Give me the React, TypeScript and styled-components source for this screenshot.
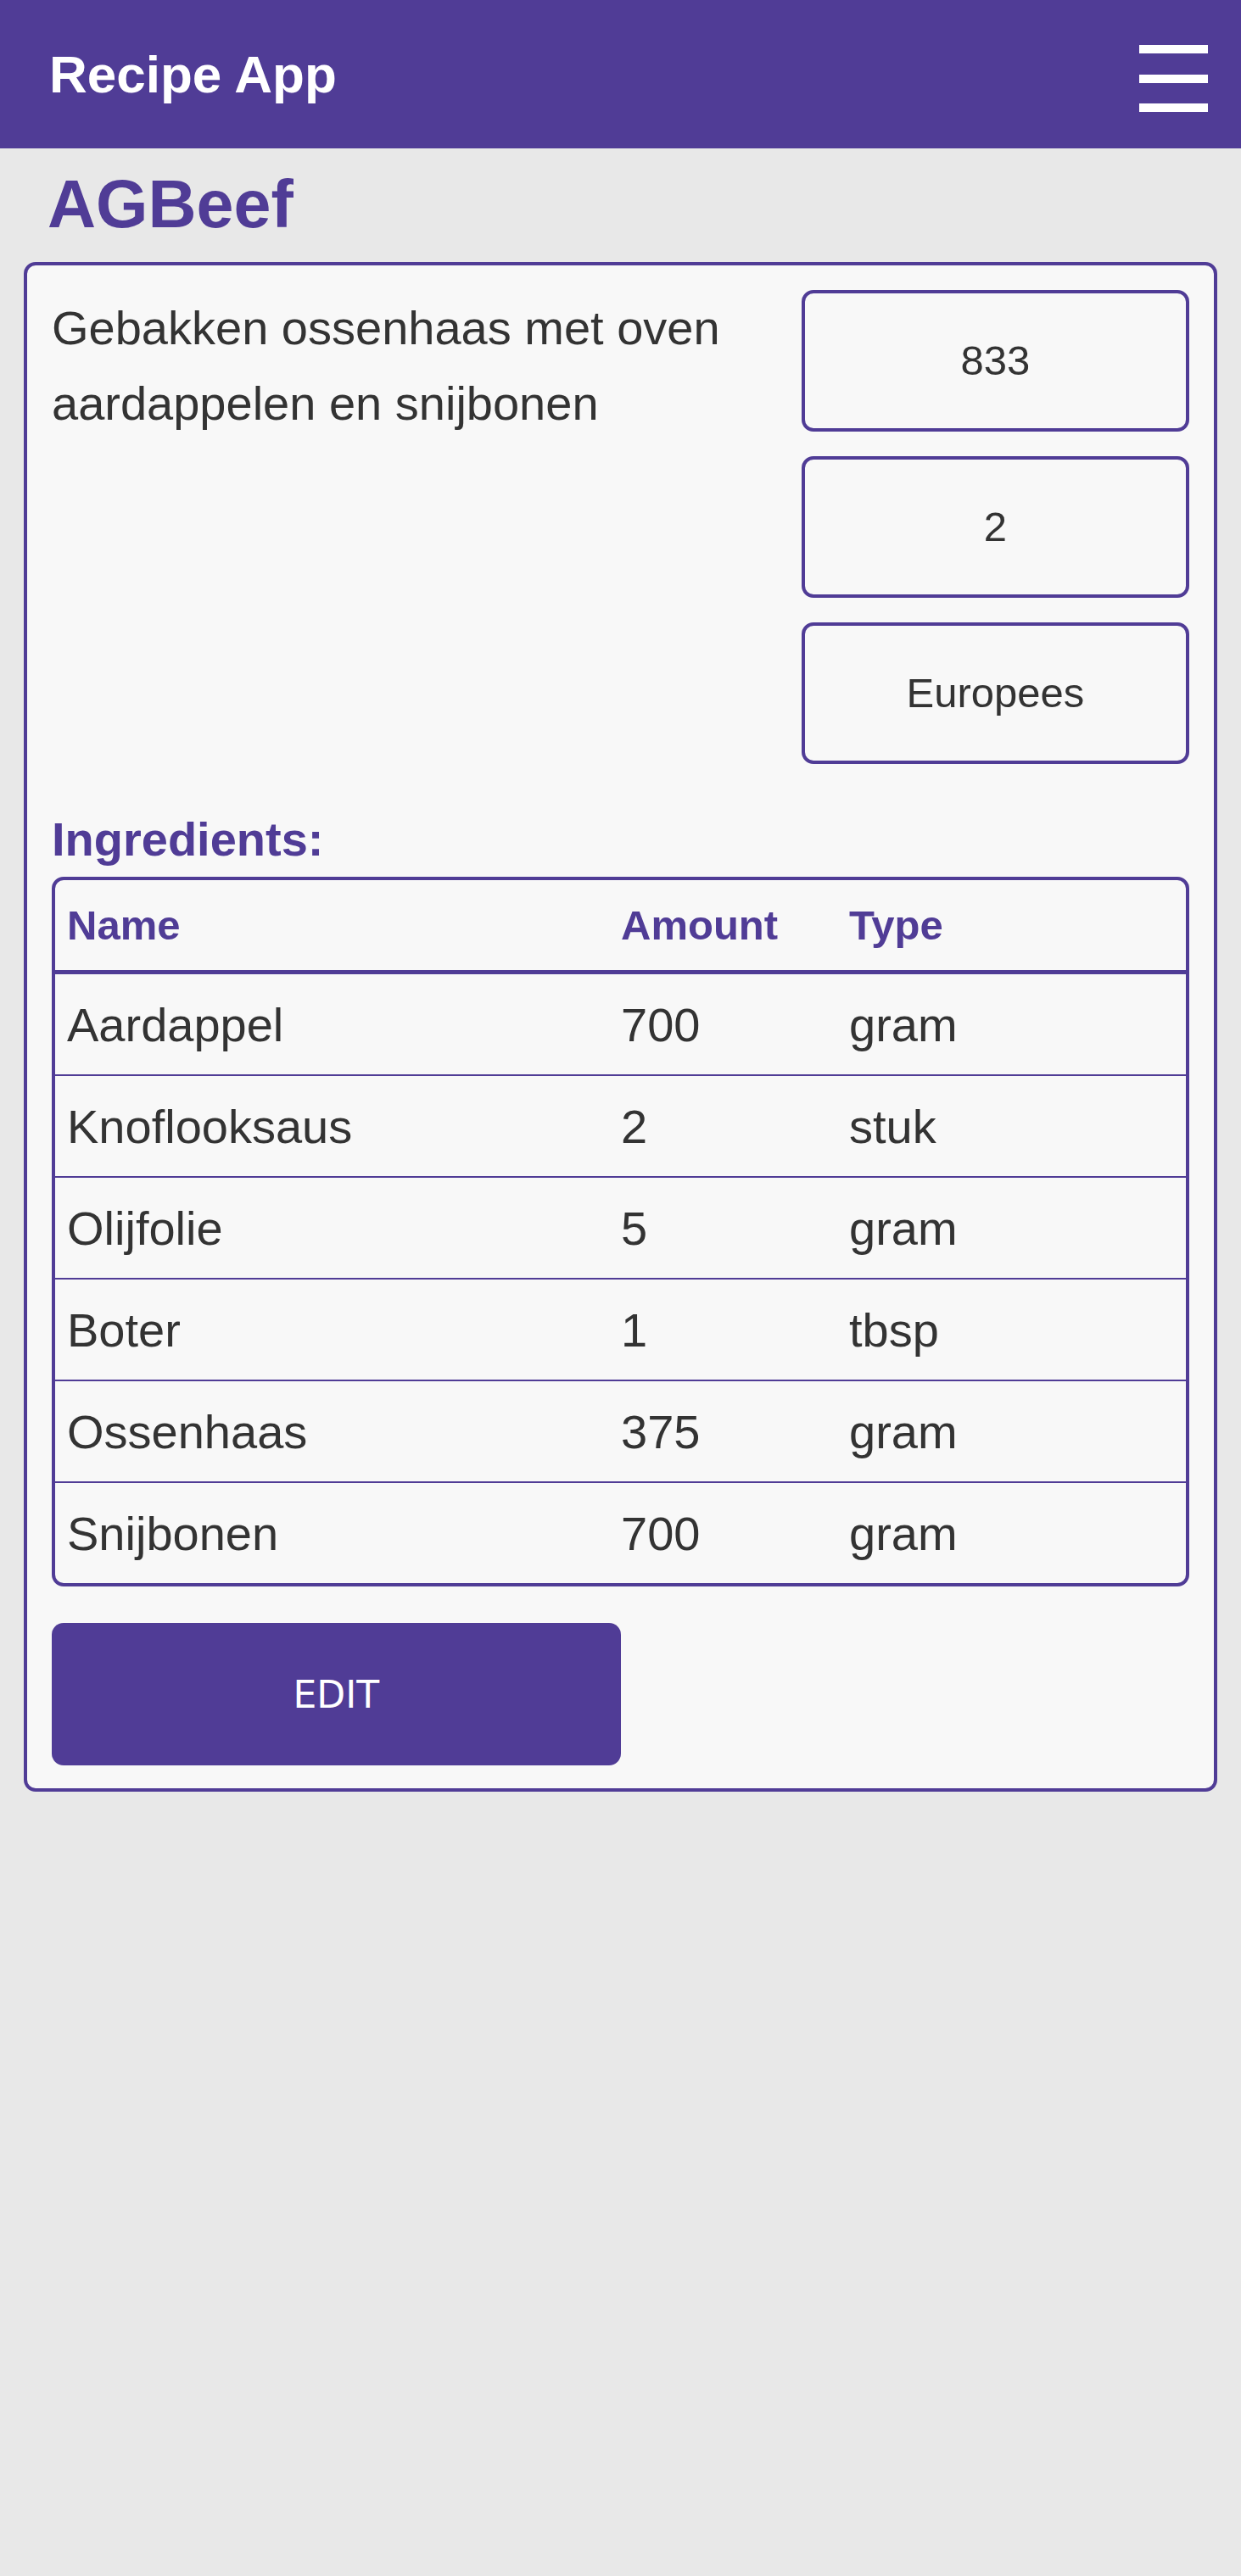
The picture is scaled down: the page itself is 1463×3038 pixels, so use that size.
import React from 'react';
import styled, { createGlobalStyle } from 'styled-components';

const PURPLE = '#503c96';

const GlobalStyle = createGlobalStyle`
  html, body {
    margin: 0;
    padding: 0;
    background: #e8e8e8;
  }
  body {
    font-family: 'Liberation Sans', Arial, sans-serif;
    color: #333;
    min-height: 3038px;
  }
`;

const SHeader = styled.header`
  height: 175px;
  background: ${PURPLE};
  display: flex;
  align-items: center;
  justify-content: space-between;
  padding: 0 39px 0 58px;
  box-sizing: border-box;
`;

const SBrand = styled.h1`
  margin: 0;
  color: #fff;
  font-size: 62px;
  font-weight: 700;
`;

const SMenuBtn = styled.button`
  background: none;
  border: none;
  padding: 0;
  margin-top: 10px;
  cursor: pointer;
  display: flex;
`;

const STitle = styled.h2`
  margin: 21px 0 22px 56px;
  font-size: 79px;
  font-weight: 700;
  line-height: 1.15;
  color: ${PURPLE};
`;

const SCard = styled.section`
  margin: 0 28px;
  border: 4px solid ${PURPLE};
  border-radius: 14px;
  background: #f8f8f8;
  padding: 29px 29px 27px;
`;

const STop = styled.div`
  display: flex;
  gap: 40px;
`;

const SDescription = styled.p`
  flex: 1;
  margin: 0;
  font-size: 56px;
  line-height: 1.6;
`;

const SStats = styled.div`
  width: 457px;
  display: flex;
  flex-direction: column;
  gap: 29px;
`;

const SStat = styled.div`
  height: 167px;
  box-sizing: border-box;
  border: 4px solid ${PURPLE};
  border-radius: 14px;
  display: flex;
  align-items: center;
  justify-content: center;
  font-size: 49px;
`;

const SSubTitle = styled.h3`
  margin: 44px 0 0;
  font-size: 56px;
  line-height: 1.6;
  font-weight: 700;
  color: ${PURPLE};
`;

const STable = styled.table`
  width: 100%;
  border: 4px solid ${PURPLE};
  border-radius: 14px;
  border-collapse: separate;
  border-spacing: 0;
`;

const STh = styled.th<{ $width?: number }>`
  width: ${({ $width }) => ($width ? `${$width}px` : 'auto')};
  height: 106px;
  padding: 0 14px;
  text-align: left;
  font-size: 49px;
  font-weight: 700;
  color: ${PURPLE};
  border-bottom: 5px solid ${PURPLE};
`;

const STd = styled.td<{ $last?: boolean }>`
  height: 118px;
  padding: 0 14px;
  font-size: 56px;
  border-bottom: ${({ $last }) => ($last ? 'none' : `2px solid ${PURPLE}`)};
`;

const SEditBtn = styled.button`
  display: block;
  margin-top: 43px;
  width: 50%;
  height: 168px;
  border: none;
  border-radius: 14px;
  background: ${PURPLE};
  color: #fff;
  font-family: 'DejaVu Sans', Verdana, sans-serif;
  font-size: 44px;
  cursor: pointer;
`;

const ingredients = [
  { name: 'Aardappel', amount: 700, type: 'gram' },
  { name: 'Knoflooksaus', amount: 2, type: 'stuk' },
  { name: 'Olijfolie', amount: 5, type: 'gram' },
  { name: 'Boter', amount: 1, type: 'tbsp' },
  { name: 'Ossenhaas', amount: 375, type: 'gram' },
  { name: 'Snijbonen', amount: 700, type: 'gram' },
];

function MenuIcon() {
  return (
    <svg width='81' height='79' viewBox='0 0 81 79'>
      <rect x='0' y='0' width='81' height='10' fill='#fff' />
      <rect x='0' y='35' width='81' height='10' fill='#fff' />
      <rect x='0' y='69' width='81' height='10' fill='#fff' />
    </svg>
  );
}

export default function App() {
  return (
    <>
      <GlobalStyle />
      <SHeader>
        <SBrand>Recipe App</SBrand>
        <SMenuBtn aria-label='menu'>
          <MenuIcon />
        </SMenuBtn>
      </SHeader>

      <STitle>AGBeef</STitle>

      <SCard>
        <STop>
          <SDescription>Gebakken ossenhaas met oven aardappelen en snijbonen</SDescription>
          <SStats>
            <SStat>833</SStat>
            <SStat>2</SStat>
            <SStat>Europees</SStat>
          </SStats>
        </STop>

        <SSubTitle>Ingredients:</SSubTitle>
        <STable>
          <thead>
            <tr>
              <STh $width={625}>Name</STh>
              <STh $width={241}>Amount</STh>
              <STh>Type</STh>
            </tr>
          </thead>
          <tbody>
            {ingredients.map((item, i) => {
              const last = i === ingredients.length - 1;
              return (
                <tr key={item.name}>
                  <STd $last={last}>{item.name}</STd>
                  <STd $last={last}>{item.amount}</STd>
                  <STd $last={last}>{item.type}</STd>
                </tr>
              );
            })}
          </tbody>
        </STable>

        <SEditBtn>EDIT</SEditBtn>
      </SCard>
    </>
  );
}
